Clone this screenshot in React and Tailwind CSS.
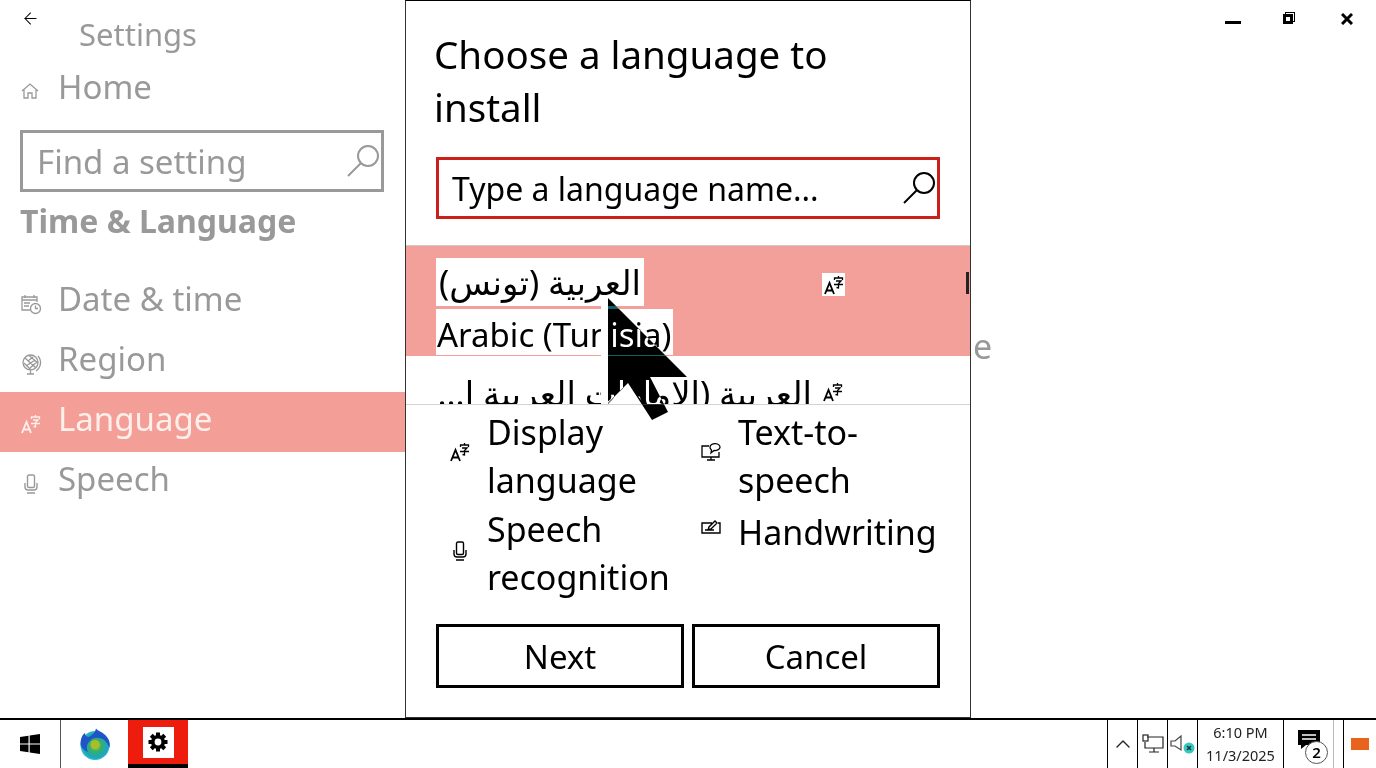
import { ArrowLeft, ChevronUp } from 'lucide-react';

const font = { fontFamily: '"Noto Sans", "DejaVu Sans", "Noto Sans CJK SC", sans-serif' };

// Small icons, hand drawn to follow the Windows settings glyphs
function LangIcon({ className = 'text-black' }) {
  return (
    <svg viewBox="0 0 20 20" className={`w-5 h-5 ${className}`} fill="none" stroke="currentColor" strokeWidth="1.3">
      <path d="M1 19 L5.5 8 L10 19 M2.6 15.5 H8.4" strokeWidth="1.8" />
      <path d="M14.5 1 V2.5 M10.5 5 V3 H18.5 V5 M12 6 H17 L14.5 8.5 V13 L12.5 12.5 M10 9.5 H19" />
    </svg>
  );
}

function HomeIcon() {
  return (
    <svg viewBox="0 0 20 20" className="w-5 h-5 text-[#999]" fill="none" stroke="currentColor" strokeWidth="1.3">
      <path d="M2 10 L10 3 L18 10 M4 9 V17 H8 V12 H12 V17 H16 V9" />
    </svg>
  );
}

function CalendarIcon() {
  return (
    <svg viewBox="0 0 22 22" className="w-[22px] h-[22px] text-[#999]" fill="none" stroke="currentColor" strokeWidth="1.3">
      <path d="M10 17 H2 V4 H17 V9 M5 2 V5 M14 2 V5 M2 7 H17 M4 10 H10 M4 13 H9" />
      <circle cx="15.5" cy="15.5" r="5" />
      <path d="M15.5 12.5 V15.5 H18" />
    </svg>
  );
}

function GlobeIcon() {
  return (
    <svg viewBox="0 0 22 22" className="w-[22px] h-[22px] text-[#999]" fill="none" stroke="currentColor" strokeWidth="1.3">
      <circle cx="10.5" cy="9.5" r="7.5" />
      <path d="M5 5 L16 15 M4 10 L11 17 M9 2.5 L18 10 M8 8 L13 4 M6 13 L15 7 M10 15 L17 9 M18 3 A10 10 0 0 1 16 18 M10.5 18 V21 M7 21 H14" />
    </svg>
  );
}

function MicIcon({ className = 'text-black' }) {
  return (
    <svg viewBox="0 0 20 20" className={`w-5 h-5 ${className}`} fill="none" stroke="currentColor" strokeWidth="1.4">
      <rect x="6.5" y="1" width="7" height="12.5" rx="1.5" />
      <path d="M4 9 V13 A3 3 0 0 0 7 16 H13 A3 3 0 0 0 16 13 V9 M6 19 H14" />
    </svg>
  );
}

function SpeechIcon() {
  return (
    <svg viewBox="0 0 20 20" className="w-5 h-5 text-black" fill="none" stroke="currentColor" strokeWidth="1.3">
      <path d="M8 4 H1 V15 H18 V10 M10 15 V18 M6 18 H14" />
      <path d="M9 5 A5 3.5 0 1 1 13 8.5 L10 11 L10.5 8 A4 3.5 0 0 1 9 5 Z" />
    </svg>
  );
}

function PenIcon() {
  return (
    <svg viewBox="0 0 20 20" className="w-5 h-5 text-black" fill="none" stroke="currentColor" strokeWidth="1.4">
      <path d="M11 5 H1 V15 H19 V5 H17 M7 12 L8 9 L14 3 L16 5 L10 11 Z M4 12 H13" />
    </svg>
  );
}

function Magnifier({ className }) {
  return (
    <svg viewBox="0 0 36 36" className={`w-9 h-9 -mr-[1px] ${className}`} fill="none" stroke="currentColor" strokeWidth="2">
      <circle cx="22" cy="13" r="10" />
      <path d="M15 20 L2 33" />
    </svg>
  );
}

function GearIcon() {
  const teeth = [0, 45, 90, 135];
  return (
    <svg viewBox="0 0 20 20" className="w-5 h-5" fill="black">
      {teeth.map((deg) => (
        <rect key={deg} x="8" y="0.5" width="4" height="19" transform={`rotate(${deg} 10 10)`} />
      ))}
      <circle cx="10" cy="10" r="7" />
      <circle cx="10" cy="10" r="3.4" fill="white" />
    </svg>
  );
}

function FirefoxLogo() {
  return (
    <svg viewBox="0 0 32 32" className="w-8 h-8">
      <defs>
        <radialGradient id="ffInner" cx="0.52" cy="0.5" r="0.6">
          <stop offset="0" stopColor="#c9c72a" />
          <stop offset="0.35" stopColor="#35b06a" />
          <stop offset="0.7" stopColor="#1aa6c4" />
          <stop offset="1" stopColor="#56d6d0" />
        </radialGradient>
      </defs>
      <circle cx="16" cy="17.5" r="14.5" fill="url(#ffInner)" />
      <path d="M1.5 15 C2 9 4 6 6 5 C6 8 8 9 10 9 C13 7 16 5 17 0.5 C20 4 24 4 27 8 C30 11 31.5 15 30.5 20 C28 14 25 11 22 10.5 C18 9 13 10 11 13 C8 15 7 20 9 24 C4 22 1.5 19 1.5 15 Z" fill="#1f55c8" />
      <circle cx="16" cy="16.5" r="4.5" fill="#a8bf2a" />
    </svg>
  );
}

function SidebarRow({ icon, label, active }) {
  return (
    <div className={`h-[60px] flex items-center pl-5 shrink-0 ${active ? 'bg-[#f49e98] text-[#fdf0ec]' : 'text-[#999]'}`}>
      <div className="w-[22px] flex justify-center mt-1">{icon}</div>
      <span className="ml-4 -mt-2 text-[33px] leading-none">{label}</span>
    </div>
  );
}

function Sidebar() {
  return (
    <aside className="w-[405px] shrink-0 flex flex-col">
      <div className="h-[60px] shrink-0 flex items-start">
        <ArrowLeft className="w-[19px] h-[19px] mt-[9px] ml-[21px] text-black" strokeWidth={1.3} />
        <span className="ml-[39px] mt-[15px] text-[31px] leading-[38px] text-[#999]">Settings</span>
      </div>
      <div className="h-[54px] shrink-0 flex items-center pl-5 text-[#999]">
        <div className="mt-2"><HomeIcon /></div>
        <span className="ml-[18px] -mt-[2px] text-[33px] leading-none">Home</span>
      </div>
      <div className="mt-4 ml-5 w-[364px] h-[62px] shrink-0 border-[3px] border-[#999] flex items-center justify-between pl-[14px] text-[#999]">
        <span className="text-[33px] leading-none">Find a setting</span>
        <Magnifier className="text-[#999]" />
      </div>
      <div className="h-[58px] shrink-0 flex items-center pl-5 text-[32px] font-bold text-[#999] leading-none">Time &amp; Language</div>
      <div className="h-[22px] shrink-0" />
      <SidebarRow icon={<CalendarIcon />} label="Date & time" />
      <SidebarRow icon={<GlobeIcon />} label="Region" />
      <SidebarRow icon={<LangIcon className="text-[#fdf0ec]" />} label="Language" active />
      <SidebarRow icon={<MicIcon className="text-[#999]" />} label="Speech" />
    </aside>
  );
}

function Feature({ icon, children }) {
  return (
    <div className="flex items-center">
      <div className="w-[45px] pl-2 shrink-0">{icon}</div>
      <div className="text-[34px] leading-[48px] text-black">{children}</div>
    </div>
  );
}

function Dialog() {
  return (
    <section className="w-[566px] shrink-0 bg-white border border-[#333] border-t-black flex flex-col overflow-hidden">
      <h1 className="mt-[27px] ml-[28px] text-[38.5px] font-normal leading-[53px] text-black">
        Choose a language to<br />install
      </h1>
      <div className="mt-[23px] ml-[30px] w-[504px] h-[62px] shrink-0 border-[3px] border-[#cc1f1a] flex items-center justify-between pl-[13px] text-black">
        <span className="mt-[2px] text-[32px] leading-none">Type a language name...</span>
        <Magnifier className="text-black" />
      </div>

      <div className="mt-[26px] h-[160px] shrink-0 border-t border-[#ccc] border-b border-b-[#d4d4d4] overflow-hidden">
        <div className="h-[110px] bg-[#f4a09a] relative pl-[30px]">
          <div className="pt-3 flex flex-col items-start">
            <span dir="rtl" className="h-12 px-[3px] bg-white text-[34px] leading-[48px] text-black whitespace-nowrap">العربية (تونس)</span>
            <span className="mt-[3px] h-[46px] pl-[1px] pr-[2px] bg-white text-[33px] leading-[51px] text-black whitespace-nowrap">Arabic (Tunisia)</span>
          </div>
          <div className="absolute left-[416px] top-[27px] w-[23px] h-[23px] bg-white flex items-center justify-center"><LangIcon /></div>
          <div className="absolute right-[1px] top-[26px] w-[3px] h-[22px] bg-[#222]" />
        </div>
        <div className="h-12 relative pl-[30px] flex">
          <span dir="rtl" className="w-[376px] whitespace-nowrap text-[34px] leading-[48px] text-black pt-[13px]">العربية (الإمارات العربية ا...</span>
          <div className="absolute left-[417px] top-[26px]"><LangIcon /></div>
        </div>
      </div>

      <div className="mt-[3px] ml-[36px] grid grid-cols-[251px_1fr] items-center">
        <Feature icon={<div className="-mt-2"><LangIcon /></div>}>Display<br />language</Feature>
        <Feature icon={<div className="-mt-2"><SpeechIcon /></div>}>Text-to-<br />speech</Feature>
        <div className="mt-px">
          <Feature icon={<div className="-mt-1"><MicIcon /></div>}>Speech<br />recognition</Feature>
        </div>
        <div className="self-start mt-[4px]">
          <Feature icon={<div className="-mt-2"><PenIcon /></div>}>Handwriting</Feature>
        </div>
      </div>

      <div className="mt-[23px] ml-[30px] flex gap-2">
        <button className="w-[248px] h-16 border-[3px] border-black text-[33px] text-black leading-none">Next</button>
        <button className="w-[248px] h-16 border-[3px] border-black text-[33px] text-black leading-none">Cancel</button>
      </div>
    </section>
  );
}

function RightSide() {
  return (
    <div className="flex-1 flex flex-col">
      <div className="h-10 flex justify-end text-black">
        <div className="w-[56px] flex justify-center pt-[21px]"><div className="w-4 h-[3px] bg-black" /></div>
        <div className="w-[56px] flex justify-center pt-[13px]">
          <div className="relative w-3 h-3">
            <div className="absolute left-[2px] top-[-1px] w-[10px] h-[10px] border border-black" />
            <div className="absolute left-0 top-[1px] w-[10px] h-[10px] border-[3px] border-black bg-white" />
          </div>
        </div>
        <div className="w-[59px] flex justify-center pt-[13px]">
          <svg viewBox="0 0 12 12" className="w-[12px] h-[12px]" stroke="black" strokeWidth="3"><path d="M1 1 L11 11 M11 1 L1 11" /></svg>
        </div>
      </div>
      <div className="mt-[284px] ml-[2px] text-[34px] leading-[44px] text-[#999]">e</div>
    </div>
  );
}

function Taskbar() {
  return (
    <footer className="h-[50px] shrink-0 bg-white border-t-2 border-black flex items-stretch">
      <div className="w-[61px] border-r border-[#555] flex items-center justify-center">
        <svg viewBox="0 0 20 20" className="w-5 h-5" fill="black">
          <path d="M0 3 L8.5 1.8 V9.5 H0 Z M9.7 1.6 L20 0 V9.5 H9.7 Z M0 10.6 H8.5 V18.2 L0 17 Z M9.7 10.6 H20 V20 L9.7 18.4 Z" />
        </svg>
      </div>
      <div className="w-[67px] flex items-center justify-center"><FirefoxLogo /></div>
      <div className="w-[60px] bg-[#ee1c0c] border-b-4 border-black flex items-center justify-center">
        <div className="w-[31px] h-[31px] bg-white flex items-center justify-center">
          <GearIcon />
        </div>
      </div>
      <div className="flex-1" />
      <div className="w-[30px] border-l border-black flex items-center justify-center">
        <ChevronUp className="w-6 h-6 text-[#222]" strokeWidth={1.4} />
      </div>
      <div className="w-[30px] border-l border-black flex items-center justify-center">
        <svg viewBox="0 0 22 20" className="w-[22px] h-5" fill="none" stroke="#222" strokeWidth="1.2">
          <path d="M5 3 H21 V14 H3 V8 M12 14 V18 M7 18 H17" />
          <rect x="1" y="1" width="5" height="6" />
        </svg>
      </div>
      <div className="w-[30px] border-l border-black flex items-center justify-center">
        <svg viewBox="0 0 26 20" className="w-[26px] h-5" fill="none">
          <path d="M1 7 H5 L11 2 V16 L5 12 H1 Z" stroke="#444" strokeWidth="1.2" />
          <circle cx="19" cy="14" r="5.5" fill="#38c9be" />
          <path d="M17 12 L21 16 M21 12 L17 16" stroke="#134" strokeWidth="1.5" />
        </svg>
      </div>
      <div className="w-[86px] border-l border-black flex flex-col items-center justify-center text-[14.5px] leading-[23px] text-[#222]">
        <span>6:10 PM</span>
        <span>11/3/2025</span>
      </div>
      <div className="w-[50px] border-l border-black relative flex items-center justify-center">
        <svg viewBox="0 0 22 20" className="w-[22px] h-5 -mt-2" fill="black">
          <path d="M0 0 H22 V15 H8 L3 19 V15 H0 Z" />
          <path d="M4 5 H18 M4 9 H18" stroke="white" strokeWidth="1.4" />
        </svg>
        <div className="absolute left-[21px] top-[21px] w-[23px] h-[23px] rounded-full border border-[#555] bg-white flex items-center justify-center text-[15px] font-semibold leading-none text-black">2</div>
      </div>
      <div className="w-[10px] border-l border-[#bbb]" />
      <div className="w-[33px] border-l border-black flex items-center justify-center">
        <div className="w-[18px] h-[12px] bg-[#e8641c]" />
      </div>
    </footer>
  );
}

// Mouse pointer lies over everything: white halo plus an inverting arrow
function Cursor() {
  return (
    <>
      <svg viewBox="0 0 100 130" className="absolute left-[600px] top-[295px] w-[100px] h-[130px] pointer-events-none">
        <path d="M1 8 H8 V109 H1 Z" fill="white" />
        <path d="M8 109 L28 88 L44 109 Z" fill="white" />
      </svg>
      <svg viewBox="0 0 100 130" className="absolute left-[600px] top-[295px] w-[100px] h-[130px] pointer-events-none mix-blend-difference">
        <path d="M8 3 L87 82 H50 L68 117 L52 125 L28 88 L8 108 Z" fill="white" />
      </svg>
    </>
  );
}

export default function App() {
  return (
    <div className="relative h-[768px] w-[1376px] overflow-hidden bg-white flex flex-col" style={font}>
      <main className="flex-1 flex min-h-0">
        <Sidebar />
        <Dialog />
        <RightSide />
      </main>
      <Taskbar />
      <Cursor />
    </div>
  );
}
